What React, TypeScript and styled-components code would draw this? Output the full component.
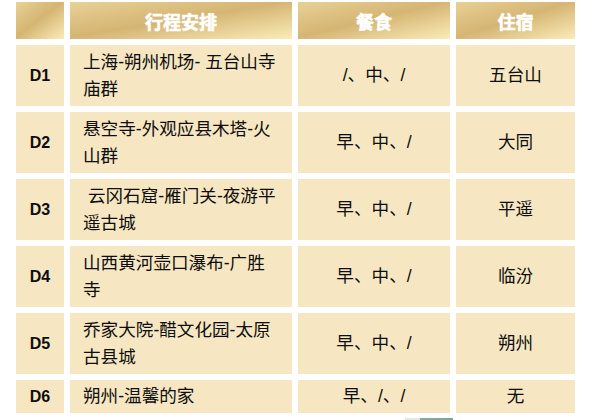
import { Fragment } from 'react';
import styled, { createGlobalStyle } from 'styled-components';

const GlobalStyle = createGlobalStyle`
    html, body {
        margin: 0;
        padding: 0;
        background: #ffffff;
    }
    body {
        font-family: "Liberation Sans", "Noto Sans CJK SC", sans-serif;
        color: #111111;
    }
`;

const Page = styled.div`
    width: 599px;
    height: 420px;
    overflow: hidden;
    padding: 2px 0 0 16px;
    box-sizing: border-box;
`;

const Schedule = styled.div`
    display: grid;
    grid-template-columns: 48px 222px 152px 119px;
    grid-template-rows: 37px repeat(5, 61px) 33px;
    gap: 6px;
`;

const HeadCell = styled.div`
    display: flex;
    align-items: center;
    justify-content: center;
    background: linear-gradient(to bottom right, #e8d197 0%, #d5b573 48%, #fbecb9 100%);
    color: #ffffff;
    font-family: "Noto Sans CJK SC", sans-serif;
    font-weight: 700;
    font-size: 18px;
    -webkit-text-stroke: 0.6px #ffffff;
`;

const Cell = styled.div<{ $align?: 'left' | 'center' }>`
    display: flex;
    align-items: center;
    justify-content: ${(p) => (p.$align === 'left' ? 'flex-start' : 'center')};
    text-align: ${(p) => p.$align ?? 'center'};
    padding: 0 13px;
    background: #f6e7c2;
    color: #0d0d0d;
    font-size: 17.6px;
    line-height: 27px;
    white-space: pre-wrap;
`;

const DayCell = styled(Cell)`
    padding: 0;
    font-family: "Liberation Sans", Arial, sans-serif;
    font-weight: 700;
    font-size: 16px;
`;

const Peek = styled.div`
    margin: 5px 0 0 389px;
    width: 48px;
    height: 4px;
    background: linear-gradient(to right, #e4e9e6 0%, #e4e9e6 30%, #86ad9f 32%, #7aa596 100%);
`;

const rows = [
    { day: 'D1', route: '上海-朔州机场- 五台山寺庙群', meals: '/、中、/', stay: '五台山' },
    { day: 'D2', route: '悬空寺-外观应县木塔-火山群', meals: '早、中、/', stay: '大同' },
    { day: 'D3', route: ' 云冈石窟-雁门关-夜游平遥古城', meals: '早、中、/', stay: '平遥' },
    { day: 'D4', route: '山西黄河壶口瀑布-广胜寺', meals: '早、中、/', stay: '临汾' },
    { day: 'D5', route: '乔家大院-醋文化园-太原古县城', meals: '早、中、/', stay: '朔州' },
    { day: 'D6', route: '朔州-温馨的家', meals: '早、/、/', stay: '无' },
];

export default function App() {
    return (
        <Page>
            <GlobalStyle />
            <Schedule>
                <HeadCell />
                <HeadCell>行程安排</HeadCell>
                <HeadCell>餐食</HeadCell>
                <HeadCell>住宿</HeadCell>
                {rows.map((row) => (
                    <Fragment key={row.day}>
                        <DayCell>{row.day}</DayCell>
                        <Cell $align="left">{row.route}</Cell>
                        <Cell>{row.meals}</Cell>
                        <Cell>{row.stay}</Cell>
                    </Fragment>
                ))}
            </Schedule>
            <Peek />
        </Page>
    );
}
